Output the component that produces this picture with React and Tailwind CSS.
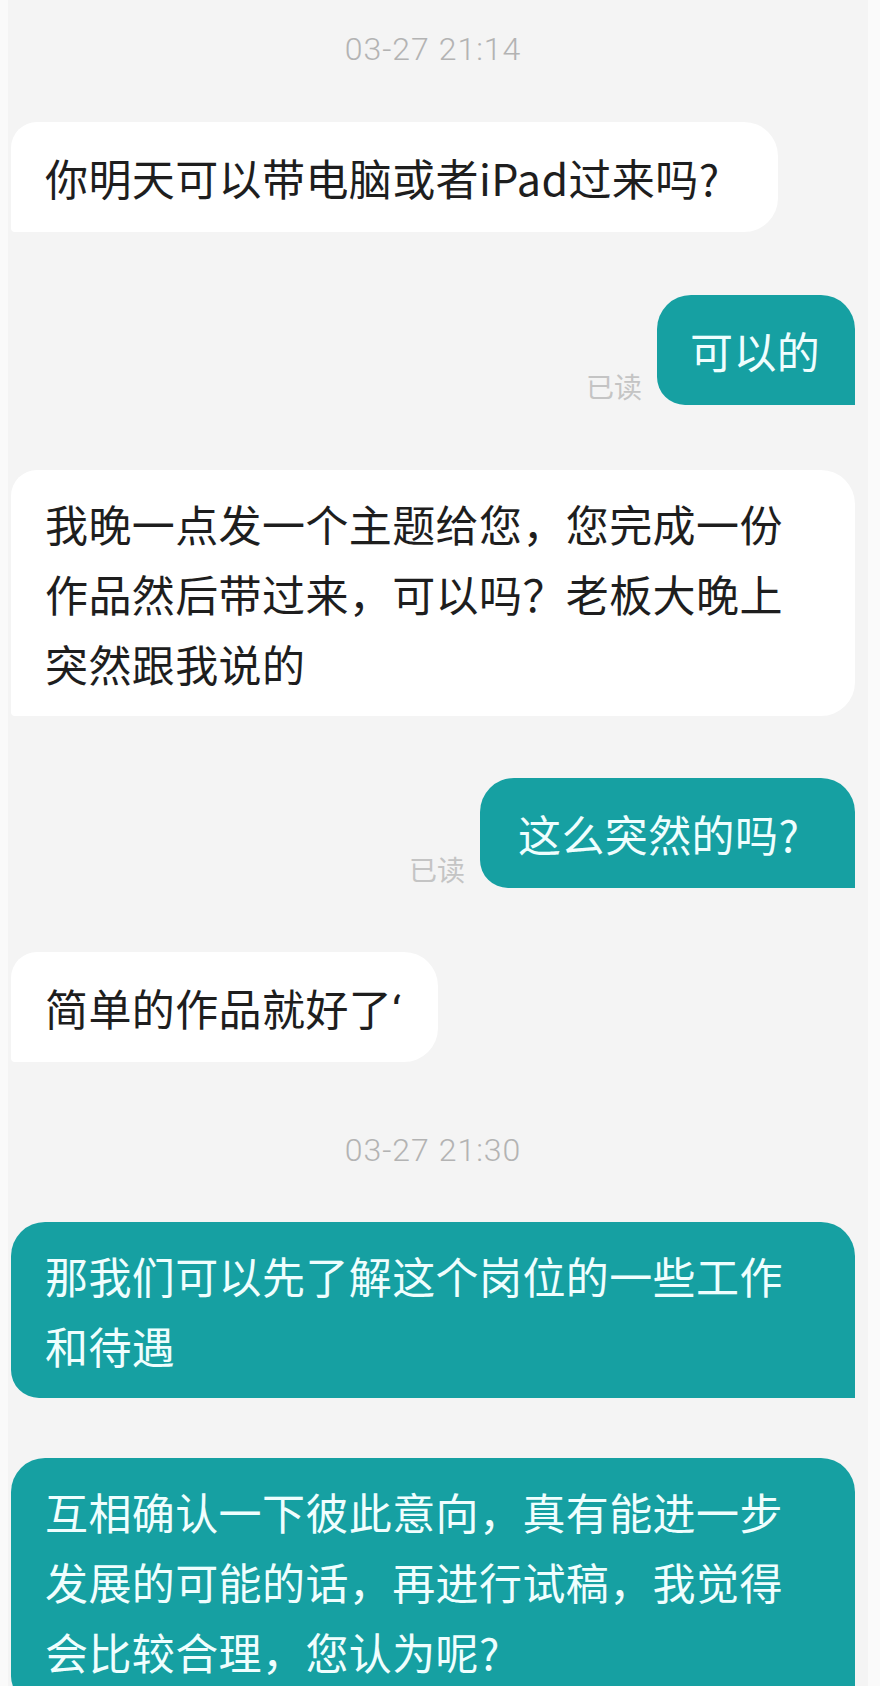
const cjk = { fontFamily: '"Noto Sans CJK SC", "Noto Sans", sans-serif' }

const Stamp = ({ text, className = '' }) => (
  <div
    className={`h-[36px] leading-[36px] text-center text-[32px] font-light tracking-[1px] text-[#b3b3b3] ${className}`}
    style={{ fontFamily: 'Roboto, "Liberation Sans", sans-serif' }}
  >
    {text}
  </div>
)

const Lines = ({ lines }) =>
  lines.map((line, i) => (
    <div key={i} className="h-[70px] whitespace-nowrap">
      {line}
    </div>
  ))

const Received = ({ lines, width, className = '' }) => (
  <div
    className={`bg-white text-[#1e1e1e] text-[43px] leading-[70px] tracking-[0.4px] rounded-tl-[26px] rounded-tr-[34px] rounded-br-[34px] rounded-bl-[4px] pl-[34px] ${lines.length === 1 ? 'py-[20px]' : 'py-[18px]'} ${width} ${className}`}
    style={cjk}
  >
    <Lines lines={lines} />
  </div>
)

const Sent = ({ lines, width, read = false, className = '', pl = 'pl-[34px]' }) => (
  <div className={`flex items-end justify-end gap-[15px] ${className}`}>
    {read && (
      <span className="pb-[3px] text-[28px] leading-[32px] text-[#c4c4c4]" style={cjk}>
        已读
      </span>
    )}
    <div
      className={`bg-[#16a0a2] text-[#effefe] text-[43px] leading-[70px] tracking-[0.4px] rounded-tl-[34px] rounded-tr-[34px] rounded-bl-[28px] rounded-br-none ${pl} ${lines.length === 1 ? 'py-[20px]' : 'py-[18px]'} ${width}`}
      style={cjk}
    >
      <Lines lines={lines} />
    </div>
  </div>
)

export default function App() {
  return (
    <div className="w-[880px] h-[1707px] overflow-hidden bg-[#fafafa] flex flex-col">
      <div className="flex-1 min-h-0 overflow-hidden ml-[8px] mr-[12px] pl-[3px] pr-[13px] bg-[#f4f4f4] flex flex-col">
        <Stamp text="03-27 21:14" className="mt-[31px]" />

        <Received
          className="mt-[55px]"
          width="w-[767px]"
          lines={['你明天可以带电脑或者iPad过来吗?']}
        />

        <Sent className="mt-[63px]" width="w-[198px]" pl="pl-[33px]" read lines={['可以的']} />

        <Received
          className="mt-[65px]"
          width="w-full"
          lines={['我晚一点发一个主题给您，您完成一份', '作品然后带过来，可以吗？老板大晚上', '突然跟我说的']}
        />

        <Sent className="mt-[62px]" width="w-[375px]" pl="pl-[38px]" read lines={['这么突然的吗?']} />

        <Received
          className="mt-[64px]"
          width="w-[427px]"
          lines={[
            <>
              简单的作品就好了
              <span style={{ fontFamily: 'Roboto, sans-serif' }}>‘</span>
            </>,
          ]}
        />

        <Stamp text="03-27 21:30" className="mt-[70px]" />

        <Sent
          className="mt-[54px]"
          width="w-full"
          lines={['那我们可以先了解这个岗位的一些工作', '和待遇']}
        />

        <Sent
          className="mt-[60px]"
          width="w-full"
          lines={['互相确认一下彼此意向，真有能进一步', '发展的可能的话，再进行试稿，我觉得', '会比较合理，您认为呢?']}
        />
      </div>
      <div className="h-[21px] bg-white" />
    </div>
  )
}
